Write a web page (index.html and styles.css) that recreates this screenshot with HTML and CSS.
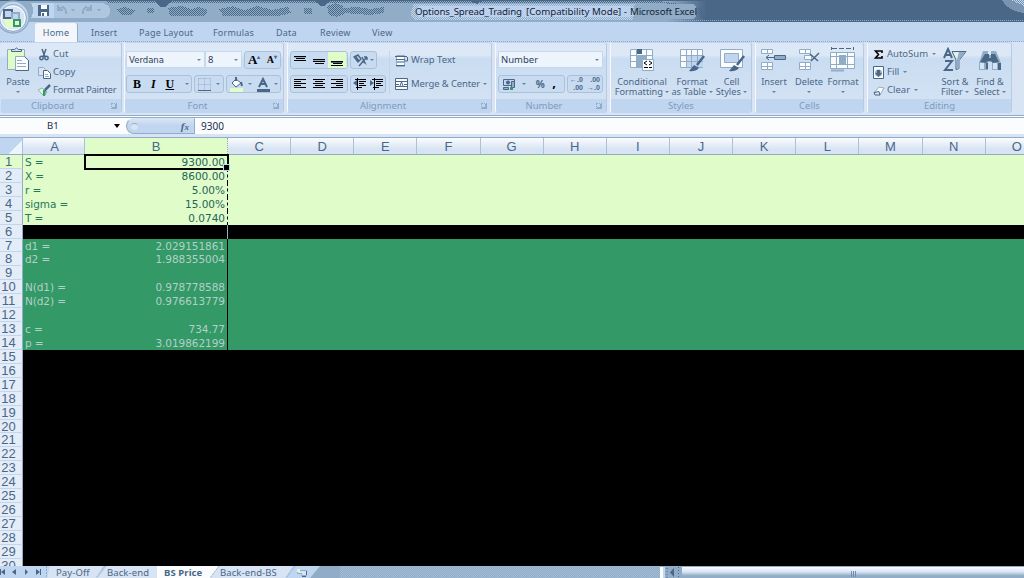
FILE: index.html
```html
<!DOCTYPE html>
<html lang="en">
<head>
<meta charset="utf-8">
<title>Options_Spread_Trading - Microsoft Excel</title>
<link rel="stylesheet" href="styles.css">
</head>
<body>
<div class="app">
<header class="titlebar">
  <svg class="glass" width="1024" height="22" viewBox="0 0 1024 22" shape-rendering="crispEdges">
    <defs>
      <pattern id="dot" width="2" height="2" patternUnits="userSpaceOnUse"><path fill="#4a6788" d="M0 0h1v1H0zM1 1h1v1H1z"/></pattern>
      <pattern id="lite" width="2" height="2" patternUnits="userSpaceOnUse"><path fill="#bfd5f0" d="M0 0h1v1H0zM1 1h1v1H1z"/></pattern>
      <linearGradient id="tb"><stop offset="0" stop-color="#91acc6"/><stop offset=".65" stop-color="#91acc6"/><stop offset=".69" stop-color="#4a6788"/><stop offset="1" stop-color="#4a6788"/></linearGradient>
    </defs>
    <rect width="1024" height="22" fill="url(#tb)"/>
    <path fill="url(#dot)" d="M107 1h541v2H107zM117 9l8-2 10 3-4 5h-9zM147 8h7v5h-7zM168 8l13-2 11 3 6-2 10 3-3 6h-35zM219 9l14-3 11 4 14-4 14 4 16-3 3 6-12 3h-56zM304 8h8v6h-8zM327 6l8-3 8 3 2 8-8 3-8-2zM343 8l15-1 12 2 14-2v6l-14 2-27-2zM600 1h60l40 6 10 14-10-3-2-12-38-3h-60z"/>
    <path fill="#4a6788" d="M0 0h1024v1H0zM154 1h17l-6 6h-5zM315 1h15l-6 5h-4zM470 1h12l-5 3z"/>
    <path fill="url(#lite)" d="M414 4h226l-8 16H414q-6-6 0-16z"/>
    <rect x="416" y="6" width="218" height="11" rx="5" fill="#bfd5f0" opacity=".8"/>
    <rect x="634" y="4" width="62" height="15" rx="4" fill="#91acc6"/>
    <path fill="#91acc6" d="M1002 0h22v13q-16-2-22-13z" opacity=".65"/><path fill="url(#lite)" d="M1011 0h13v6z"/>
    <path d="M0 20.500h1024" stroke="#91acc6" stroke-dasharray="1 1"/>
    <path d="M31 3h71q8 1 8 8t-8 7H31q4-8 0-15z" fill="#bfd5f0"/><path d="M54 3h48q8 1 8 8t-8 7H54z" fill="#91acc6" opacity=".35"/>
    <path fill="#4a6788" d="M38 5h11v11H38z"/><path fill="#fbfcfe" d="M41 5h6v4h-6zM41 12h6v4h-6z"/><path fill="#4a6788" d="M42 13h2v3h-2z"/>
    <path d="M58 9q8-5 8 5M58 5v5h5M91 9q-8-5-8 5M91 5v5h-5" fill="none" stroke="#91acc6" stroke-width="2"/><path d="M70 9h5l-2 3zM96 9h5l-2 3z" fill="#91acc6"/>
  </svg>
  <svg class="orb" width="36" height="36" viewBox="0 0 36 36">
    <circle cx="13" cy="17" r="16" fill="#bfd5f0" stroke="#91acc6" stroke-width="1.500"/><circle cx="13" cy="18" r="13.500" fill="#d8e4f3" stroke="#91acc6"/><circle cx="13" cy="18" r="12" fill="#d8e4f3" stroke="#fbfcfe"/>
    <rect x="4" y="10" width="8" height="8" fill="#bfd5f0" stroke="#4a6788" stroke-width="2"/><rect x="12" y="13" width="7" height="7" fill="#bfd5f0" stroke="#91acc6" stroke-width="2"/>
    <path fill="#e0fcc8" d="M3 19h11v9H7z"/><rect x="14" y="20" width="6" height="6" fill="#e0fcc8" stroke="#339966" stroke-width="2"/>
  </svg>
  <div class="caption"><span class="c1">Options_Spread_Trading</span><span class="c2">[Compatibility Mode] -</span><span class="c3">Microsoft Excel</span></div>
</header>
<nav class="tabs">
  <span class="tab on">Home</span><span class="tab t2">Insert</span><span class="tab t3">Page Layout</span><span class="tab t4">Formulas</span><span class="tab t5">Data</span><span class="tab t6">Review</span><span class="tab t7">View</span>
</nav>
<section class="ribbon">
  <div class="group clip">
    <div class="body">
      <div class="big paste"><svg width="26" height="26" viewBox="0 0 26 26"><path fill="#e0fcc8" stroke="#91acc6" d="M2.500 2.500h17v20h-17z"/><path fill="#d8e4f3" stroke="#4a6788" d="M6.500 4.500v-2h3q2-3 4 0h3v2z"/><path fill="#fbfcfe" stroke="#91acc6" d="M10.500 9.500h9l4 4v10h-13z"/><path d="M19.500 9.500l4 4v10h-13" fill="none" stroke="#4a6788"/><path stroke="#91acc6" d="M12 13.500h5M12 16.500h9M12 19.500h9"/></svg><span>Paste</span><i class="arr"></i></div>
      <div class="stack">
        <div class="cmd"><svg width="13" height="13" viewBox="0 0 13 13"><path d="M4 1l3 8M8 1L5 9" stroke="#4a6788" stroke-width="1.500"/><circle cx="3.500" cy="10" r="1.700" fill="none" stroke="#4a6788" stroke-width="1.500"/><circle cx="8.500" cy="10" r="1.700" fill="none" stroke="#4a6788" stroke-width="1.500"/></svg><span>Cut</span></div>
        <div class="cmd"><svg width="13" height="13" viewBox="0 0 13 13"><path fill="#d8e4f3" stroke="#91acc6" d="M.5 1.500h5l2 2v6h-7z"/><path fill="#fbfcfe" stroke="#4a6788" d="M5.500 4.500h4l3 3v5h-7z"/><path stroke="#91acc6" d="M7 8.500h3M7 10.500h4"/></svg><span>Copy</span></div>
        <div class="cmd painter"><svg width="13" height="13" viewBox="0 0 13 13"><path fill="#e0fcc8" stroke="#91acc6" d="M0 6l4-2 5 4-3 4z"/><path fill="#339966" d="M5 6h3l-1 6H5z"/><path stroke="#4a6788" stroke-width="2.500" d="M7 6l5-5"/></svg><span>Format Painter</span></div>
      </div>
    </div><div class="glabel">Clipboard<i class="launch"></i></div>
  </div>
  <div class="group font">
    <div class="body rows">
      <div class="line"><div class="combo cname"><span>Verdana</span><i class="arr"></i></div><div class="combo csize"><span>8</span><i class="arr"></i></div><div class="box bx-aa"><b class="serif a1">A<sup>▴</sup></b><b class="serif a2">A<sup>▾</sup></b></div></div>
      <div class="line"><div class="box bx-biu"><b class="serif">B</b><b class="serif"><em>I</em></b><b class="serif"><u>U</u></b><i class="arr"></i></div><div class="box bx-bd"><svg width="13" height="13"><path d="M.5.500h12M.5 6.500h12M.5.500v12M6.500.500v12M12.500.500v12" stroke="#91acc6" stroke-dasharray="1 1"/><path d="M0 12.500h13" stroke="#4a6788"/></svg><i class="arr"></i></div><div class="box bx-col"><svg width="16" height="15" viewBox="0 0 16 15"><path fill="#fbfcfe" stroke="#4a6788" d="M3 6l4-4 5 4-5 4z"/><path stroke="#4a6788" stroke-width="2" d="M7 0v4M12 5l1 4"/><path fill="#e0fcc8" d="M1 11h13v4H1z"/></svg><i class="arr"></i><svg width="15" height="15" viewBox="0 0 15 15"><path d="M3 10l4-8 4 8M5 7h5" stroke="#4a6788" stroke-width="2" fill="none"/><path fill="#4a6788" d="M1 12h13v3H1z"/></svg><i class="arr"></i></div></div>
    </div><div class="glabel">Font<i class="launch"></i></div>
  </div>
  <div class="group align">
    <div class="body">
      <div class="rows">
        <div class="line"><div class="box three"><span class="cell"><svg width="12" height="14"><path d="M0 3.500h12M2 5.500h9M0 7.500h12" stroke="#000"/><path d="M0 4.500h12" stroke="#91acc6"/></svg></span><span class="cell"><svg width="12" height="14"><path d="M0 6.500h12M0 8.500h12M2 10.500h9" stroke="#000"/><path d="M0 7.500h12" stroke="#91acc6"/></svg></span><span class="cell hot"><svg width="12" height="14"><path d="M0 8.500h12M2 10.500h9M0 12.500h12" stroke="#000"/><path d="M0 9.500h12" stroke="#4a6788"/></svg></span></div><div class="box orient"><svg width="16" height="13" viewBox="0 0 16 13"><path d="M1 3l4-2 3 4-3 3zM3 3l3 4M6 12l8-9M14 3h-3M14 3v3M9 3l3 6-3-2" stroke="#4a6788" stroke-width="1.400" fill="none"/></svg><i class="arr"></i></div></div>
        <div class="line"><div class="box three"><span class="cell"><svg width="12" height="12"><path d="M0 1.500h12M0 3.500h7M0 5.500h12M0 7.500h7M0 9.500h12" stroke="#000"/></svg></span><span class="cell"><svg width="12" height="12"><path d="M0 1.500h12M2 3.500h8M0 5.500h12M2 7.500h8M0 9.500h12" stroke="#000"/></svg></span><span class="cell"><svg width="12" height="12"><path d="M0 1.500h12M5 3.500h7M0 5.500h12M5 7.500h7M0 9.500h12" stroke="#000"/></svg></span></div><div class="box two"><svg width="13" height="12"><path d="M2 1.500h11M6 3.500h7M6 5.500h5M6 7.500h7M3 9.500h6M4.500 0v12" stroke="#000"/><path fill="#4a6788" d="M0 5l4-3v6z"/></svg><svg width="13" height="12"><path d="M2 1.500h11M6 3.500h7M6 5.500h5M6 7.500h7M3 9.500h6M4.500 0v12" stroke="#000"/><path fill="#4a6788" d="M0 2l4 3-4 3z"/></svg></div></div>
      </div>
      <div class="rows wraps">
        <div class="cmd w1"><svg width="14" height="13"><path fill="#fbfcfe" stroke="#91acc6" d="M1.500 1.500h8v11h-8z"/><path stroke="#4a6788" d="M0 2.500h12M1 5.500h9M1 11.500h9"/><path stroke="#91acc6" d="M2 8h7" stroke-width="2"/><path d="M12.500 3v4H9" fill="none" stroke="#4a6788"/></svg><span>Wrap Text</span></div>
        <div class="cmd w2"><svg width="14" height="13"><path fill="#fbfcfe" stroke="#4a6788" d="M.5.500h12v11H.5zM0 3.500h13M0 8.500h13"/><path fill="#fbfcfe" d="M1 4h11v4H1z"/><path d="M1 6.500h3M9 6.500h3M5 8l1.500-4L8 8" fill="none" stroke="#4a6788"/></svg><span>Merge &amp; Center</span><i class="arr"></i></div>
      </div>
    </div><div class="glabel">Alignment<i class="launch"></i></div>
  </div>
  <div class="group num">
    <div class="body rows">
      <div class="line"><div class="combo cnum"><span>Number</span><i class="arr"></i></div></div>
      <div class="line"><div class="box n1"><svg width="14" height="13"><path fill="#bfd5f0" stroke="#4a6788" d="M1.500 1.500h11v6h-11z"/><circle cx="6" cy="4.500" r="2" fill="#4a6788"/><path fill="#91acc6" stroke="#4a6788" d="M9.500 3.500h3v6h-3zM1.500 9.500h5v2h-5z"/><path fill="#339966" d="M8 9h3v3H8z"/></svg><i class="arr"></i><b class="pct">%</b><b class="comma">,</b></div><div class="box n2"><div class="dec"><span>←.0</span><span>.00</span></div><div class="dec"><span>.00</span><span>→.0</span></div></div></div>
    </div><div class="glabel">Number<i class="launch"></i></div>
  </div>
  <div class="group styles">
    <div class="body">
      <div class="big b1"><svg width="26" height="26"><path fill="#fbfcfe" stroke="#91acc6" d="M1.500 2.500h22v18h-22zM1 8.500h23M1 14.500h23M7.500 2v18M17.500 2v18"/><path fill="#4a6788" d="M8 2h5v5H8z"/><path fill="#91acc6" d="M8 8h9v6H8zM8 15h6v5H8z"/><path fill="#fbfcfe" stroke="#91acc6" d="M13.500 12.500h11v11h-11z"/><path d="M18 14l-3 2 3 2M15 20.500h4M20 14l3 2-3 2M20 20.500h3" fill="none" stroke="#000"/></svg><span>Conditional</span><span>Formatting <i class="arr"></i></span></div>
      <div class="big b2"><svg width="26" height="26"><path fill="#fbfcfe" stroke="#91acc6" d="M1.500 2.500h22v18h-22z"/><path fill="#bfd5f0" d="M7 8h17v12H7z"/><path stroke="#91acc6" d="M1 8.500h23M1 14.500h23M7.500 2v18M12.500 2v18M18.500 2v18"/><path stroke="#4a6788" stroke-width="2.500" d="M25 9l-7 9"/><path fill="#4a6788" d="M10 24l5-6 5 3q-4 4-10 3z"/></svg><span>Format</span><span>as Table <i class="arr"></i></span></div>
      <div class="big b3"><svg width="26" height="26"><path fill="#fbfcfe" stroke="#91acc6" d="M1.500 2.500h22v18h-22z"/><path fill="#bfd5f0" stroke="#91acc6" d="M5.500 6.500h14v9h-14z"/><path stroke="#4a6788" stroke-width="2.500" d="M25 9l-7 9"/><path fill="#4a6788" d="M10 24l5-6 5 3q-4 4-10 3z"/></svg><span>Cell</span><span>Styles <i class="arr"></i></span></div>
    </div><div class="glabel">Styles</div>
  </div>
  <div class="group cells">
    <div class="body">
      <div class="big c-1"><svg width="26" height="26"><path fill="#fbfcfe" stroke="#91acc6" d="M.5 2.500h11v4H.5zM.5 15.500h11v7H.5zM6.500 2v4M6.500 15v8M0 19.500h12"/><path fill="#91acc6" stroke="#4a6788" d="M13.500 8.500h11v4h-11z"/><path d="M5 10.500h8M8 8l-3 2.500 3 2.500" fill="none" stroke="#4a6788"/></svg><span>Insert</span><i class="arr"></i></div>
      <div class="big c-2"><svg width="26" height="26"><path fill="#fbfcfe" stroke="#91acc6" d="M3.500 2.500h11v4h-11zM8.500 8.500h7v4h-7zM3.500 15.500h11v7h-11zM9.500 2v4M9.500 15v8M3 19.500h12"/><path d="M14 7l8 7M23 6l-8 8" stroke="#4a6788" stroke-width="1.500"/></svg><span>Delete</span><i class="arr"></i></div>
      <div class="big c-3"><svg width="26" height="26"><path d="M2 1.500h21" stroke="#4a6788" stroke-dasharray="5 2"/><path d="M1.500 0v3M23.500 0v3" stroke="#4a6788"/><path fill="#fbfcfe" stroke="#91acc6" d="M.5 5.500h24v16H.5zM0 9.500h25M0 17.500h25M6.500 5v17M17.500 5v17"/><path fill="#91acc6" d="M9 8h7v10H9z"/><path d="M1 23.500h13" stroke="#91acc6" stroke-width="2"/></svg><span>Format</span><i class="arr"></i></div>
    </div><div class="glabel">Cells</div>
  </div>
  <div class="group edit">
    <div class="body">
      <div class="stack">
        <div class="cmd"><svg width="12" height="13"><path fill="none" stroke="#000" stroke-width="1.600" d="M9 5V3H2.500L5.500 6.500 2.500 10H9V8"/></svg><span>AutoSum</span><i class="arr"></i></div>
        <div class="cmd"><svg width="12" height="13"><path fill="#fbfcfe" stroke="#4a6788" d="M.5.500h10v12H.5z"/><circle cx="5.500" cy="7" r="3.500" fill="#91acc6"/><path fill="#4a6788" d="M4 4h3v3h2L5.500 11 2 7h2z"/></svg><span>Fill</span><i class="arr"></i></div>
        <div class="cmd"><svg width="12" height="13"><path fill="#fbfcfe" stroke="#91acc6" d="M1 9l5-6 5 1-4 7z"/><path fill="#d8e4f3" stroke="#4a6788" d="M1 8.500l5-1 1 3.500H2z"/></svg><span>Clear</span><i class="arr"></i></div>
      </div>
      <div class="big e1"><svg width="26" height="26"><path d="M2 11l4-9 4 9M4 8h5M3 14h7l-7 9h8" fill="none" stroke="#4a6788" stroke-width="2"/><path fill="#d8e4f3" stroke="#4a6788" d="M10 4.500h14l-7 9v8l-3 1V13z"/><path fill="#91acc6" d="M17 5h6l-5 7v9l-3 1v-9z"/><path fill="#e0fcc8" d="M12 6h4l-1 5z"/></svg><span>Sort &amp;</span><span>Filter <i class="arr"></i></span></div>
      <div class="big e2"><svg width="26" height="26"><path fill="#91acc6" d="M6 4h5v4h3V4h5l5 12v7h-9v-8h-4v8H2v-7z"/><path fill="#4a6788" d="M8 7h4v4h2V7h4l4 8-6 1-2-2h-3l-2 2-6-1zM9 16h2v6H9zM21 16h3v7h-3z"/><path fill="#d8e4f3" d="M3 16h4v6H3zM16 16h4v6h-4z"/></svg><span>Find &amp;</span><span>Select <i class="arr"></i></span></div>
    </div><div class="glabel">Editing</div>
  </div>
</section>
<section class="formula">
  <div class="namebox"><span>B1</span><svg width="8" height="5"><path d="M1 0h6L4 4z"/></svg></div>
  <div class="fx"><i class="knob"></i><b>f<small>x</small></b></div>
  <div class="value">9300</div>
</section>
<main class="sheet" id="sheet"></main>
<footer class="bottom">
  <svg class="sheets" width="340" height="12" viewBox="0 0 340 12">
    <path fill="#bfd5f0" d="M0 0h320l-10 12H0z"/><path fill="#d8e4f3" d="M50 0h53l-6 12H47zM107 0h50v12H98zM219 0h74l-8 12h-75z"/>
    <path fill="#fbfcfe" d="M157 0h62l-9 12h-53z"/><path d="M46.500 0v12M105 0l-9 12M219 0l-9 12M295 0l-9 12" stroke="#91acc6" stroke-dasharray="2 1"/>
    <path fill="#4a6788" d="M0 3h1v6H0zM5 3v6L1 6zM16 3v6l-4-3zM25 3v6l3-3zM36 3v6l4-3zM40 3h1v6h-1z"/>
    <path fill="#d8e4f3" stroke="#91acc6" d="M297.500 4.500h9v5h-5v-2h-4z"/><path stroke="#4a6788" d="M302 10.500h4M306.500 5v4"/><path fill="#e0fcc8" d="M297 3h3v3h-3z"/>
  </svg>
  <div class="names"><span class="s1">Pay-Off</span><span class="s2">Back-end</span><b class="s3">BS Price</b><span class="s4">Back-end-BS</span></div>
  <div class="gap"></div>
  <div class="scroll"><i class="split"></i><svg class="left" width="17" height="11"><path fill="#91acc6" d="M0 0h17v11H0z"/><path fill="#4a6788" d="M9 1v9L5 5.500z"/><path d="M2 1v10M13.500 0v11" stroke="#4a6788" stroke-dasharray="1 2"/></svg><div class="track"><i></i><i></i><i></i></div></div>
</footer>
</div>
<script src="sheet.js"></script>
</body>
</html>
```

FILE: styles.css
```css
* { box-sizing: border-box; }
body { margin: 0; background: #000; color: #4a6788; font: 9.5px/12px "Noto Sans", "Open Sans", sans-serif; }
i { font-style: normal; }
svg { display: block; flex: none; }
.app { width: 1024px; height: 578px; display: flex; flex-direction: column; overflow: hidden; }
.titlebar { height: 22px; flex: none; position: relative; background: #91acc6; }
.glass { position: absolute; left: 0; top: 0; }
.orb { position: absolute; left: 0; top: 0; z-index: 3; }
.caption { position: relative; display: flex; padding: 5px 0 0 415px; color: #14243a; font-size: 9.7px; line-height: 13px; white-space: pre; }
.c1 { width: 111px; letter-spacing: -.2px; }
.c2 { width: 104px; }
.c3 { letter-spacing: -.1px; }
.tabs { height: 20px; flex: none; display: flex; background: #bfd5f0; border-bottom: 1px dotted #91acc6; padding-left: 35px; line-height: 19px; font-size: 9px; }
.tab { padding-top: 1px; white-space: nowrap; letter-spacing: .2px; }
.tab.on { width: 43px; height: 19px; margin-top: 1px; padding-top: 0; background: #f3f7fc; text-align: center; border-right: 1px solid #91acc6; border-radius: 3px 3px 0 0; }
.t2 { margin-left: 13px; width: 48px; }
.t3 { width: 74px; }
.t4 { width: 63px; }
.t5 { width: 44px; }
.t6 { width: 52px; }
.ribbon { height: 73px; flex: none; display: flex; gap: 3px; padding-bottom: 3px; background: #d8e4f3; }
.group { height: 71px; flex: none; border: 1px solid #bfd5f0; border-left-color: #f5f9fe; border-right-color: #b5cbe4; border-radius: 3px; display: flex; flex-direction: column; background: linear-gradient(#dce8f5 0 12px, #c9dcf1 16px, #d3e2f3 55px); overflow: hidden; }
.body { height: 56px; flex: none; display: flex; }
.glabel { flex: 1; background: #bfd5f0; text-align: center; color: #7f9cba; line-height: 13px; font-size: 9.5px; padding-right: 14px; position: relative; }
.launch { position: absolute; right: 4px; top: 4px; width: 6px; height: 6px; border: 1px dotted #91acc6; border-right: 2px solid #91acc6; border-bottom: 2px solid #91acc6; }
.clip { width: 122px; border-left: 0; padding-left: 1px; }
.font { width: 160px; margin-left: -1px; }
.align { width: 205px; }
.num { width: 112px; }
.styles { width: 142px; }
.cells { width: 109px; }
.edit { width: 145px; }
.clip .glabel { padding-right: 17px; }
.font .glabel, .align .glabel { padding-right: 13px; }
.arr { display: inline-block; flex: none; width: 0; height: 0; border: 2px solid transparent; border-top: 2.500px solid #6482a3; border-bottom: 0; vertical-align: 2px; }
.big { display: flex; flex-direction: column; align-items: center; padding-top: 4px; font-size: 9.2px; line-height: 10px; white-space: nowrap; flex: none; }
.big svg { margin-bottom: 4px; }
.paste { width: 34px; }
.paste .arr, .cells .arr { margin-top: 4px; }
.stack { display: flex; flex-direction: column; padding: 2px 0 0 4px; }
.clip .stack { padding-left: 3px; }
.cmd { display: flex; align-items: center; gap: 2px; height: 18px; white-space: nowrap; }
.painter { letter-spacing: -.25px; }
.rows { display: flex; flex-direction: column; gap: 5px; padding-top: 8px; }
.line { display: flex; height: 19px; }
.font .body { padding-left: 1px; }
.combo { height: 17px; background: #eef4fb; border: 1px solid #c5d8ee; display: flex; align-items: center; justify-content: space-between; padding: 0 3px 0 2px; color: #29415f; }
.cname { width: 79px; font-family: "DejaVu Sans", sans-serif; font-size: 8.5px; }
.csize { width: 37px; margin-right: 2px; }
.box { display: flex; align-items: center; height: 18px; border: 1px solid #a9c2dc; border-radius: 3px; background: #c8dbf1; }
.serif { font-family: "Liberation Serif", serif; color: #000; font-size: 12px; }
.serif sup { font-size: 6px; line-height: 0; color: #4a6788; }
.bx-aa { width: 37px; justify-content: space-around; }
.serif.a1 { font-size: 13px; }
.serif.a2 { font-size: 10px; }
.bx-biu { width: 66px; padding: 0 2px 0 6px; justify-content: space-between; margin-right: 2px; }
.bx-bd { width: 30px; padding: 0 3px; justify-content: space-between; margin-right: 2px; }
.bx-col { width: 55px; padding: 0 2px; justify-content: space-between; }
.bx-biu u { margin-right: 1px; }
.align .rows { padding-left: 2px; }
.three { width: 58px; margin-right: 2px; }
.cell { width: 19px; height: 16px; display: flex; align-items: center; justify-content: center; border-right: 1px dotted #bfd5f0; }
.hot { background: #e0fcc8; }
.orient { width: 27px; padding: 0 2px; justify-content: space-between; }
.two { width: 36px; justify-content: space-around; }
.align .wraps { margin: 8px 0 0 auto; padding: 0 0 0 5px; gap: 6px; border-left: 1px solid #bfd5f0; height: 43px; width: 102px; }
.w2 { letter-spacing: -.12px; }
.w2 .arr { margin-left: 1px; }
.num .body { padding-left: 2px; }
.cnum { width: 105px; }
.n1 { width: 67px; padding: 0 8px 0 3px; justify-content: space-between; margin-right: 2px; }
.n1 .arr { margin-left: -3px; }
.pct { font-size: 10px; margin-right: -2px; }
.comma { color: #000; font-size: 13px; padding-bottom: 4px; }
.n2 { width: 36px; justify-content: space-around; }
.dec { display: flex; flex-direction: column; font: bold 7px/8px "Liberation Sans", sans-serif; text-align: right; }
.styles .body { padding-left: 3px; }
.b1 { width: 56px; }
.b2 { width: 44px; }
.b3 { width: 35px; }
.c-1 { width: 36px; }
.c-2 { width: 34px; }
.c-3 { width: 34px; }
.edit .stack { width: 69px; padding-left: 5px; }
.edit .cmd .arr { margin-left: 2px; }
.e1 { width: 36px; }
.e2 { width: 34px; }
.styles .glabel, .cells .glabel, .edit .glabel { padding-right: 0; }
.formula { height: 22px; flex: none; display: flex; background: #fbfcfe; border-top: 3px double #91acc6; border-bottom: 3px solid #d8e4f3; color: #1c2f4a; line-height: 16px; }
.namebox { width: 126px; display: flex; align-items: center; justify-content: space-between; padding: 0 5px 0 47px; font-size: 9.5px; }
.fx { width: 69px; background: linear-gradient(#d8e4f3, #bfd5f0 50%); border: 1px solid #91acc6; border-top-color: #d8e4f3; border-radius: 9px 0 0 9px; display: flex; align-items: center; justify-content: space-between; padding: 0 5px 0 4px; }
.knob { width: 7px; height: 7px; border-radius: 50%; background: #d8e4f3; border-top: 1px solid #91acc6; }
.fx b { font: italic bold 11px/14px "Liberation Serif", serif; color: #4a6788; }
.fx small { font-size: 9px; }
.value { padding-left: 6px; font-size: 10px; }
.sheet { height: 429px; flex: none; overflow: hidden; background: #000; }
.hdr { height: 18px; display: flex; border-top: 1px solid #91acc6; border-bottom: 1px solid #91acc6; background: linear-gradient(#fbfcfe, #d8e4f3 70%); font: 13px/17px "Liberation Sans", sans-serif; text-align: center; }
.hdr span { width: 63.15px; flex: none; border-right: 1px solid #a9c2dc; }
.hdr .corner { width: 23px; background: linear-gradient(135deg, #bfd5f0 65%, #eef4fb 65%); }
.hdr .ca { width: 62px; padding-left: 2px; }
.hdr .cb { width: 143px; background: #e0fcc8; border-right: 1px dotted #91acc6; }
.row { height: 13.93px; display: flex; font: 10.5px/14px "DejaVu Sans", sans-serif; }
.row .rn { width: 23px; flex: none; background: #e3ecf7; color: #4a6788; border-right: 1px solid #91acc6; border-bottom: 1px solid #bfd5f0; font: 13px/14px "Liberation Sans", sans-serif; letter-spacing: 0; text-align: center; padding-right: 5px; white-space: nowrap; }
.la { width: 62px; padding-left: 2px; white-space: nowrap; letter-spacing: -.1px; }
.vb { width: 143px; padding-right: 2px; text-align: right; border-right: 1px solid #000; }
.fill { flex: 1; }
.input { color: #28755c; }
.input .la, .input .vb, .input .fill { background: #e0fcc8; }
.input .vb { color: #25645a; border-right-style: dashed; }
.blank .vb { border-right-color: #91acc6; }
.out { color: #b4cfc9; letter-spacing: -.05px; }
.out .la, .out .vb, .out .fill { background: #339966; }
.row.sel .rn { background: #e0fcc8; }
.row.sel .vb { position: relative; outline: 2px solid #000; outline-offset: -1px; border-right: 1px solid #bfd5f0; }
.row.sel .vb::after { content: ""; position: absolute; right: -3px; bottom: -2px; width: 5px; height: 5px; background: #000; border: 1px solid #bfd5f0; }
.bottom { height: 12px; flex: none; display: flex; position: relative; background: #91acc6; line-height: 12px; font-size: 9.5px; }
.names { position: absolute; left: 56px; top: 1px; display: flex; white-space: nowrap; letter-spacing: .1px; }
.s1 { width: 51px; }
.s2 { width: 57px; }
.s3 { width: 56px; }
.gap { width: 320px; background: repeating-conic-gradient(#91acc6 0 25%, #a4bdd6 0 50%) 0 0 / 2px 2px; }
.scroll { flex: 1; display: flex; border-top: 1px solid #91acc6; }
.split { width: 5px; background: #fbfcfe; border-right: 2px solid #bfd5f0; }
.track { flex: 1; background: linear-gradient(#fbfcfe, #d8e4f3 45%, #91acc6 80%); display: flex; justify-content: center; gap: 1px; padding-top: 4px; }
.track i { width: 1px; height: 6px; background: #6f8eb0; }
```

FILE: sheet.js
```js
const sheet = document.getElementById("sheet");
const cells = {
  1: ["S =", "9300.00"], 2: ["X =", "8600.00"], 3: ["r =", "5.00%"], 4: ["sigma =", "15.00%"], 5: ["T =", "0.0740"],
  7: ["d1 =", "2.029151861"], 8: ["d2 =", "1.988355004"], 10: ["N(d1) =", "0.978778588"], 11: ["N(d2) =", "0.976613779"],
  13: ["c =", "734.77"], 14: ["p =", "3.019862199"]
};
let html = '<div class="hdr"><span class="corner"></span><span class="ca">A</span><span class="cb">B</span>';
for (const c of "CDEFGHIJKLMNO") html += `<span>${c}</span>`;
html += "</div>";
for (let r = 1; r <= 30; r++) {
  const kind = r <= 5 ? "input" : r === 6 ? "blank" : r <= 14 ? "out" : "empty";
  const [a, b] = cells[r] || ["", ""];
  html += `<div class="row ${kind}${r === 1 ? " sel" : ""}"><div class="rn">${r}</div><div class="la">${a}</div><div class="vb">${b}</div><div class="fill"></div></div>`;
}
sheet.innerHTML = html;
```
